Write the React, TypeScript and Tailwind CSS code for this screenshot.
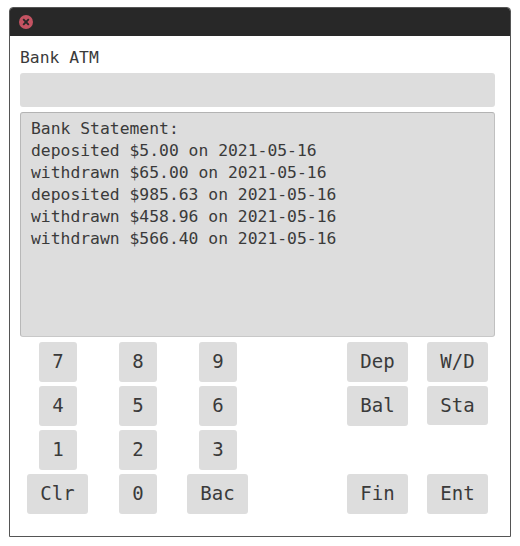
const statement = [
  'Bank Statement:',
  'deposited $5.00 on 2021-05-16',
  'withdrawn $65.00 on 2021-05-16',
  'deposited $985.63 on 2021-05-16',
  'withdrawn $458.96 on 2021-05-16',
  'withdrawn $566.40 on 2021-05-16',
];

const keys = [
  '7', '8', '9', '', 'Dep', 'W/D',
  '4', '5', '6', '', 'Bal', 'Sta',
  '1', '2', '3', '', '', '',
  'Clr', '0', 'Bac', '', 'Fin', 'Ent',
];

function Key({ label }: { label: string }) {
  if (!label) return <div />;
  const width = label.length > 1 ? 'w-[61px] mr-px' : 'w-[38px]';
  const height = label === 'Sta' ? 'h-[39px]' : 'h-10';
  return (
    <div className="flex justify-center">
      <button className={`${width} ${height} rounded-[3px] bg-[#dddddd] pb-0.5 text-[19px] leading-[38px]`}>
        {label}
      </button>
    </div>
  );
}

export default function App() {
  return (
    <div className="h-[546px] w-[520px] bg-white pt-[7px] pl-[9px] font-['DejaVu_Sans_Mono','Liberation_Mono',monospace] text-[#3a3a3a]">
      <div className="flex h-[530px] w-[502px] flex-col overflow-hidden rounded-t-[4px] border border-[#555555] bg-white">
        <div className="flex h-7 shrink-0 items-center bg-[#282828] pl-[9px]">
          <svg width="14" height="14" viewBox="0 0 14 14">
            <circle cx="7" cy="7" r="7" fill="#c45362" />
            <path d="M4.2 4.2 9.8 9.8M9.8 4.2 4.2 9.8" stroke="#282828" strokeWidth="1.9" />
          </svg>
        </div>
        <div className="flex flex-col pl-[10px] text-[16.36px]">
          <h1 className="mt-[11px] h-[22px] leading-[22px]">Bank ATM</h1>
          <input aria-label="Amount" className="mt-1 block h-[34px] w-[475px] rounded-[3px] bg-[#dddddd] px-[10px] outline-none" />
          <div className="mt-[5px] h-[225px] w-[475px] rounded-[3px] border border-t-[#b3b3b3] border-r-[#c0c0c0] border-b-[#c8c8c8] border-l-[#b8b8b8] bg-[#dddddd] pt-[5px] pl-[10px]">
            {statement.map((line) => (
              <p key={line} className="h-[22px] leading-[22px] whitespace-pre">{line}</p>
            ))}
          </div>
        </div>
        <div className="mt-[5px] ml-2 grid w-[480px] grid-cols-6 gap-y-1">
          {keys.map((label, i) => (
            <Key key={i} label={label} />
          ))}
        </div>
      </div>
    </div>
  );
}
